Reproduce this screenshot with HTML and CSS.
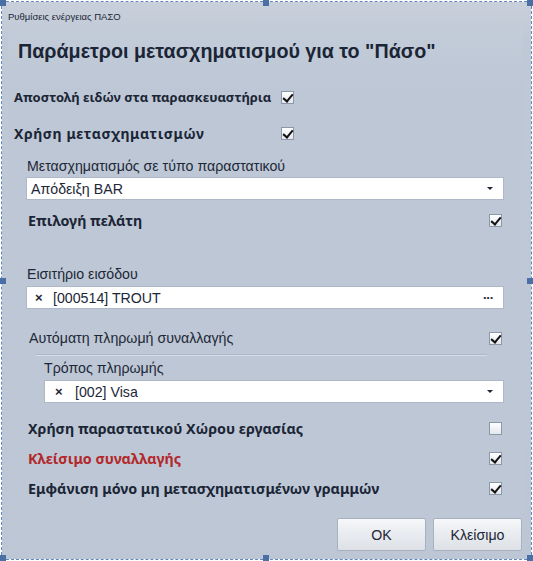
FILE: index.html
```html
<!DOCTYPE html>
<html lang="el">
<head>
<meta charset="utf-8">
<link rel="stylesheet" href="styles.css">
</head>
<body>
<div class="frame">
  <div class="window">
    <div class="titlebar">Ρυθμίσεις ενέργειας ΠΑΣΟ</div>
    <div class="panel">
      <h1 class="heading">Παράμετροι μετασχηματισμού για το "Πάσο"</h1>

      <div class="row row-top r1">
        <span class="lbl bold">Αποστολή ειδών στα παρασκευαστήρια</span>
        <span class="cb checked"></span>
      </div>
      <div class="row row-top r2">
        <span class="lbl bold">Χρήση μετασχηματισμών</span>
        <span class="cb checked"></span>
      </div>

      <div class="section">
        <div class="caption c1">Μετασχηματισμός σε τύπο παραστατικού</div>
        <div class="field f1">
          <span class="fval">Απόδειξη BAR</span>
          <span class="arrow"></span>
        </div>
        <div class="row sub r3">
          <span class="lbl bold">Επιλογή πελάτη</span>
          <span class="cb checked"></span>
        </div>

        <div class="caption c2">Εισιτήριο εισόδου</div>
        <div class="field f2">
          <span class="x">×</span>
          <span class="fval">[000514] TROUT</span>
          <span class="dots">···</span>
        </div>

        <div class="row sub r4">
          <span class="lbl">Αυτόματη πληρωμή συναλλαγής</span>
          <span class="cb checked"></span>
        </div>
        <div class="sep"></div>
        <div class="caption c3">Τρόπος πληρωμής</div>
        <div class="field f3">
          <span class="x">×</span>
          <span class="fval">[002] Visa</span>
          <span class="arrow"></span>
        </div>

        <div class="row sub r5">
          <span class="lbl bold">Χρήση παραστατικού Χώρου εργασίας</span>
          <span class="cb"></span>
        </div>
        <div class="row sub r6">
          <span class="lbl bold red">Κλείσιμο συναλλαγής</span>
          <span class="cb checked"></span>
        </div>
        <div class="row sub r7">
          <span class="lbl bold">Εμφάνιση μόνο μη μετασχηματισμένων γραμμών</span>
          <span class="cb checked"></span>
        </div>
      </div>

      <div class="buttons">
        <button class="btn">OK</button>
        <button class="btn">Κλείσιμο</button>
      </div>
    </div>
  </div>
  <span class="handle h-tl"></span>
  <span class="handle h-tm"></span>
  <span class="handle h-tr"></span>
  <span class="handle h-ml"></span>
  <span class="handle h-mr"></span>
  <span class="handle h-bl"></span>
  <span class="handle h-bm"></span>
  <span class="handle h-br"></span>
</div>
</body>
</html>
```

FILE: styles.css
```css
* { box-sizing: border-box; }
html, body { margin: 0; padding: 0; background: #ffffff; }
body {
  font-family: "Liberation Sans", Arial, sans-serif;
  color: #1d2737;
}
.frame {
  position: relative;
  width: 531px;
  height: 559px;
  margin: 1px;
  border: 1px dashed #5f86bd;
}
.window {
  height: 100%;
  background: linear-gradient(#c9d0dc 0px, #bfc8d5 40px, #bdc6d4 100%);
  display: flex;
  flex-direction: column;
  padding: 0 8px 8px 6px;
}
.titlebar {
  height: 25px;
  flex: none;
  font-size: 9.5px;
  line-height: 30px;
  color: #1d2737;
}
.panel {
  flex: 1;
  background: linear-gradient(#c3ccd9, #bdc7d5 60px);
  padding: 0 0 0 6px;
  display: flex;
  flex-direction: column;
}
.heading {
  margin: 0;
  height: 48px;
  line-height: 48px;
  font-size: 19.7px;
  font-weight: bold;
  padding-left: 4px;
  color: #1b2536;
}
.row {
  display: flex;
  align-items: center;
  height: 24px;
}
.row-top { width: 280px; justify-content: space-between; }
.r1 { margin-top: 10px; }
.r2 { margin-top: 12px; }
.lbl { font-size: 14.2px; }
.bold {
  font-family: "Noto Sans", "Liberation Sans", sans-serif;
  font-weight: bold;
  font-size: 14.3px;
  color: #1b2536;
}
.r1 .bold { font-size: 13px; }
.r2 .bold { font-size: 14px; letter-spacing: 0.6px; }
.red { color: #b3282b; }
.section {
  margin-left: 12px;
  width: 478px;
  display: flex;
  flex-direction: column;
}
.caption {
  height: 18px;
  line-height: 18px;
  font-size: 14.2px;
  padding-left: 1px;
}
.c1 { margin-top: 12px; }
.c2 { margin-top: 33px; }
.c3 { margin-top: 3px; padding-left: 18px; }
.field {
  height: 23px;
  background: #ffffff;
  border: 1px solid #aeb8c6;
  display: flex;
  align-items: center;
  font-size: 14.2px;
  padding: 0 8px 0 4px;
}
.f1 { margin-top: 2px; }
.f2 { margin-top: 3px; padding-left: 8px; }
.f3 { margin-top: 3px; margin-left: 18px; padding-left: 10px; }
.fval { flex: 1; }
.x { font-size: 13px; font-weight: bold; width: 18px; margin-top: -1px; }
.f3 .x { width: 20px; }
.arrow {
  width: 0; height: 0;
  border-left: 3px solid transparent;
  border-right: 3px solid transparent;
  border-top: 3px solid #1d2737;
  margin-right: 2px;
}
.dots { font-size: 13px; font-weight: bold; letter-spacing: -1px; margin-right: 2px; }
.sub { justify-content: space-between; padding-left: 2px; padding-right: 2px; }
.r3 { margin-top: 8px; }
.r4 { margin-top: 17px; padding-left: 3px; }
.r5 { margin-top: 13px; }
.r6 { margin-top: 6px; }
.r7 { margin-top: 6px; }
.sep {
  margin: 4px 17px 0 10px;
  height: 2px;
  background: #d7dde6;
  border-top: 1px solid #aeb8c6;
}
.cb {
  width: 13px;
  height: 13px;
  border: 1px solid #8c98a9;
  background: linear-gradient(#ffffff, #e3e7ed);
  position: relative;
  flex: none;
}
.cb.checked::after {
  content: "";
  position: absolute;
  left: 3px;
  top: 0px;
  width: 4px;
  height: 8px;
  border-right: 2px solid #111;
  border-bottom: 2px solid #111;
  transform: rotate(40deg);
}
.buttons {
  margin-top: 18px;
  display: flex;
  justify-content: flex-end;
  gap: 7px;
  padding-right: 1px;
}
.btn {
  width: 89px;
  height: 33px;
  border: 1px solid #a7b1bf;
  border-radius: 2px;
  background: linear-gradient(#f6f7f9, #e8ebef 50%, #dde1e7);
  font-family: "Liberation Sans", Arial, sans-serif;
  font-size: 14.2px;
  color: #1d2737;
  padding: 0;
}
.handle {
  position: absolute;
  width: 6px;
  height: 6px;
  background: #4a6fa5;
}
.h-tl { left: -2px; top: -2px; }
.h-tm { left: 261px; top: -2px; }
.h-tr { right: -2px; top: -2px; }
.h-ml { left: -2px; top: 276px; }
.h-mr { right: -2px; top: 276px; }
.h-bl { left: -2px; bottom: -2px; }
.h-bm { left: 261px; bottom: -2px; }
.h-br { right: -2px; bottom: -2px; }
```
